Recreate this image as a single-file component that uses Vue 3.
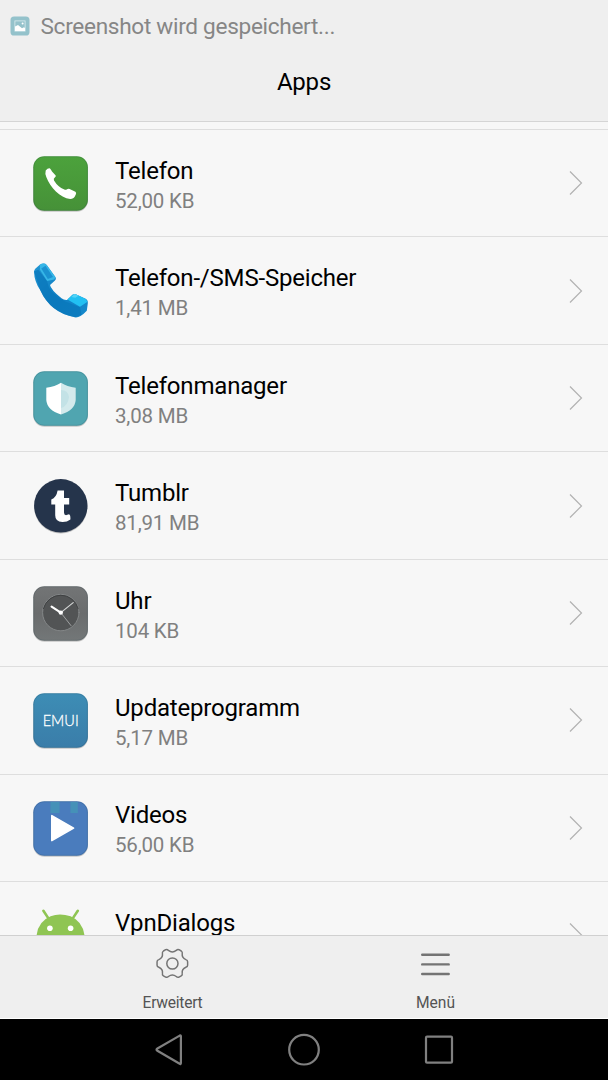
<script setup>
const apps = [
  { icon: 'phone', name: 'Telefon', size: '52,00 KB' },
  { icon: 'handset', name: 'Telefon-/SMS-Speicher', size: '1,41 MB' },
  { icon: 'shield', name: 'Telefonmanager', size: '3,08 MB' },
  { icon: 'tumblr', name: 'Tumblr', size: '81,91 MB' },
  { icon: 'clock', name: 'Uhr', size: '104 KB' },
  { icon: 'emui', name: 'Updateprogramm', size: '5,17 MB' },
  { icon: 'video', name: 'Videos', size: '56,00 KB' },
  { icon: 'android', name: 'VpnDialogs', size: '' },
]
const tiles = {
  phone: 'url(#green)',
  shield: '#50a5b0',
  clock: 'url(#grey)',
  emui: 'url(#blue)',
  video: '#4a7cbd',
}
</script>

<template>
  <div class="screen">
    <svg class="defs" aria-hidden="true">
      <defs>
        <linearGradient id="green" x1="0" y1="0" x2="0" y2="1">
          <stop offset="0" stop-color="#4ca23c" /><stop offset="1" stop-color="#469138" />
        </linearGradient>
        <linearGradient id="grey" x1="0" y1="0" x2="0" y2="1">
          <stop offset="0" stop-color="#737576" /><stop offset=".5" stop-color="#6a6c6d" /><stop offset="1" stop-color="#737778" />
        </linearGradient>
        <linearGradient id="blue" x1="0" y1="0" x2="0" y2="1">
          <stop offset="0" stop-color="#3d8db5" /><stop offset="1" stop-color="#3a7da9" />
        </linearGradient>
        <linearGradient id="tube" x1="0" y1="0" x2="1" y2="1">
          <stop offset="0" stop-color="#2296d3" /><stop offset=".5" stop-color="#0f80c4" /><stop offset="1" stop-color="#1589cc" />
        </linearGradient>
      </defs>
    </svg>

    <header class="header">
      <div class="status">
        <svg class="status-icon" viewBox="0 0 20 20">
          <rect x=".5" y=".5" width="19" height="19" rx="3.6" fill="#94c2cb" />
          <rect x="4.9" y="4.9" width="10.2" height="10.2" fill="none" stroke="#d9ecef" stroke-width=".8" />
          <path d="M5 10.5 8 9l4 3.3 2-1 1 .7v3H5z" fill="#fff" />
          <circle cx="12.6" cy="7.4" r="1" fill="#fff" />
        </svg>
        <span class="status-text">Screenshot wird gespeichert...</span>
      </div>
      <h1 class="title">Apps</h1>
    </header>

    <main class="list">
      <div v-for="app in apps" :key="app.name" class="row">
        <svg class="icon" viewBox="0 0 60 60">
          <template v-if="tiles[app.icon]">
            <rect x="3.3" y="4.4" width="54.6" height="54.4" rx="11" fill="#000" opacity=".2" />
            <rect x="3.3" y="3.2" width="54.6" height="54.6" rx="11" :fill="tiles[app.icon]" />
            <rect x="3.8" y="3.7" width="53.6" height="53.6" rx="10.5" fill="none" stroke="#20404a" stroke-opacity=".16" />
          </template>

          <path v-if="app.icon === 'phone'" fill="#fff" d="M15.7 17.4Q17.8 15 20 15.4Q21.3 16.7 22 18.4L25.7 22.4Q26.2 23.4 24.8 24.6Q23.2 25.9 24 27.4Q28 34 34.4 36.6Q35.7 37.2 37 36.3Q38.3 35.3 39.6 36L45.4 38.8Q46.7 39.8 45.8 41.4Q44 46 40.2 46.1C30 44.4 20.2 34.4 16.4 24.2Q14.8 20 15.7 17.4Z" />

          <g v-else-if="app.icon === 'handset'" transform="translate(0 .3) scale(1 .98)">
            <path fill="url(#tube)" d="M4 10.5Q4.2 8.8 5.5 7.4L9.8 3.6Q14 1 16.7 3.8L25.5 16.2Q26.6 18 25 19.6L20 24.1Q20.6 28.5 31.5 37.8Q34 39.8 37 39.5L42.5 34.2Q44.3 33 46.2 34L55.5 38.3Q58.2 39.7 57.8 43.1L56.8 50.5Q50 57.9 45 57.2Q20.4 52.5 10.3 29.6Q4.3 21 4 10.5Z" />
            <path fill="#36b6e7" d="M9.8 3.6Q14 1 16.7 3.8L25.5 16.2 24.3 18.5 17 20 10 8.7Z" />
            <path fill="#1b92d1" d="M11.3 7.4 15.5 4.5 23 16 17.8 18Z" />
            <path fill="#22c0f2" d="M37.4 39 42.5 34.2Q44.3 33 46.2 34L55.5 38.3 57.5 41.3 50 46.5Z" />
            <path fill="#54d4f7" d="M41.4 36.4 45.3 37.3 48.6 35.2 44.5 33.4Z" />
            <path fill="#0875b9" opacity=".65" d="M4 10.5 8.3 8.5 17 20 19 27Q25 36 35.5 41L50 47 51.5 54.5 45 57.2Q20.4 52.5 10.3 29.6Z" />
          </g>

          <g v-else-if="app.icon === 'shield'">
            <path fill="#fff" d="M31 14.7Q25 18.6 16.3 19.7V32Q17 42.2 31 46.4Z" />
            <path fill="#d3eaec" d="M31 14.7Q37 18.6 45.7 19.7V32Q45 42.2 31 46.4Z" />
            <path fill="#c3e2e6" d="M31 22Q38 22 39 29Q38 38 31 40Z" />
          </g>

          <g v-else-if="app.icon === 'tumblr'">
            <circle cx="30.8" cy="31" r="26.6" fill="#000" opacity=".22" />
            <circle cx="30.8" cy="29.8" r="26.7" fill="#25344b" />
            <path fill="#fff" d="M27.6 14.5H34V22H39.2V28.5H34V36.6Q34 39.4 36.5 39.1L39 38.3Q40.6 38.8 40.4 43.6Q37 46.2 32.4 46.1Q25.2 45.8 25.2 39.3V28.5H21.3V23.5Q26.4 21.6 27.6 14.5Z" />
          </g>

          <g v-else-if="app.icon === 'clock'" stroke-linecap="round" transform="translate(0 -.4)">
            <circle cx="30.8" cy="30" r="18.2" fill="#525455" stroke="#888b8c" stroke-width=".9" />
            <path d="M13.4 26A18 18 0 0 1 48.2 26" fill="none" stroke="#3c3e3f" stroke-width=".9" />
            <path d="M30.8 30 41 43" stroke="#a7a9aa" stroke-width=".9" />
            <path d="M30.8 30 43.2 20" stroke="#d5d7d7" stroke-width="1.2" />
            <path d="M30.8 30 21.6 24" stroke="#fff" stroke-width="2.2" />
            <circle cx="30.8" cy="30" r="2.2" fill="#fff" />
          </g>

          <text v-else-if="app.icon === 'emui'" x="12.7" y="35.8" class="emui" textLength="36" lengthAdjust="spacingAndGlyphs">EMUI</text>

          <g v-else-if="app.icon === 'video'">
            <path fill="#4591b8" d="M20.5 4H29.5V15H20.5ZM40.5 4H47.8V15H40.5Z" />
            <path fill="#fff" stroke="#fff" stroke-width="1.6" stroke-linejoin="round" d="M21.8 17.6V42.6L43.6 30.1Z" />
          </g>

          <g v-else-if="app.icon === 'android'" transform="translate(-.4 1)">
            <path d="M13.8 4.8 19 12.6M48.2 4.8 43 12.6" stroke="#8fc553" stroke-width="2.6" stroke-linecap="round" />
            <path fill="#8fc553" d="M6.8 33Q7 16 21 10.3Q30 6.8 41 10.3Q54.5 16 55.2 33Z" />
            <circle cx="20.3" cy="22.3" r="2.8" fill="#fff" /><circle cx="41" cy="22.3" r="2.8" fill="#fff" />
          </g>
        </svg>
        <div class="text">
          <div class="name">{{ app.name }}</div>
          <div class="size">{{ app.size }}</div>
        </div>
        <svg class="chevron" viewBox="0 0 14 26"><path d="M1 1.5 12.5 13 1 24.5" /></svg>
      </div>
    </main>

    <footer class="toolbar">
      <div class="action">
        <svg viewBox="0 0 36 36" fill="none" stroke="#747474" stroke-width="1.5" stroke-linejoin="round">
          <path transform="translate(-.3 0) scale(.98)" d="M11.2 3.8Q12.8 3.2 14 4.5Q18 7.5 22 4.5Q23.2 3.2 24.8 3.8L27.1 5.1Q28.5 6 28.1 7.6Q27.5 12.2 31.8 13.9Q33.6 14.4 33.6 16V19.6Q33.6 21.2 31.8 21.7Q27.5 23.4 28.1 28Q28.5 29.7 27.1 30.5L24.8 31.8Q23.2 32.4 22 31.1Q18 28.1 14 31.1Q12.8 32.4 11.2 31.8L8.9 30.5Q7.5 29.7 7.9 28Q8.5 23.4 4.2 21.7Q2.4 21.2 2.4 19.6V16Q2.4 14.4 4.2 13.9Q8.5 12.2 7.9 7.6Q7.5 6 8.9 5.1Z" />
          <circle cx="17.4" cy="17.5" r="5.6" />
        </svg>
        <span class="tight">Erweitert</span>
      </div>
      <div class="action">
        <svg viewBox="0 0 36 36" stroke="#747474" stroke-width="2.4" stroke-linecap="round"><path d="M4.2 8.8H30.7M4.2 18.4H30.7M4.2 28H30.7" /></svg>
        <span>Menü</span>
      </div>
    </footer>

    <nav class="nav">
      <svg viewBox="0 0 36 36"><path d="M6.4 16.5 28.7 3.6Q29.9 3 29.9 4.3V31.1Q29.9 32.5 28.7 31.8L6.4 18.8Q4.6 17.6 6.4 16.5Z" /></svg>
      <svg viewBox="0 0 36 36"><circle cx="18" cy="17.7" r="14.8" /></svg>
      <svg viewBox="0 0 36 36"><rect x="5" y="4.7" width="26" height="26" rx="1" /></svg>
    </nav>
  </div>
</template>

<style>
body { margin: 0; background: #f7f7f7; }
</style>

<style scoped>
.screen {
  width: 608px; height: 1080px; display: flex; flex-direction: column; overflow: hidden;
  background: #f7f7f7; font-family: Roboto, "Noto Sans", sans-serif; color: #000;
}
.defs { position: absolute; width: 0; height: 0; }
.header { flex: none; box-sizing: border-box; height: 122px; background: #efefef; border-bottom: 1px solid #d5d5d5; }
.status { display: flex; align-items: center; height: 52px; padding-left: 10px; gap: 10.5px; }
.status-icon { width: 20px; height: 20px; }
.status-text { font-size: 22.6px; line-height: 28px; letter-spacing: -.3px; padding-top: 1.5px; color: #868686; }
.title { margin: 14px 0 0; font-size: 24px; line-height: 32px; font-weight: 400; letter-spacing: -.2px; text-align: center; }
.list { flex: 1; min-height: 0; overflow: hidden; padding-top: 7px; }
.row {
  box-sizing: border-box; height: 107.44px; display: flex; align-items: center;
  border-top: 1px solid #dedede; padding: 0 25px 0 30px;
}
.icon { width: 60px; height: 60px; flex: none; }
.text { flex: 1; margin-left: 25px; padding-top: 4.3px; }
.name { font-size: 24px; line-height: 31px; letter-spacing: -.19px; white-space: nowrap; }
.size { font-size: 20.5px; line-height: 28px; height: 28px; letter-spacing: -.2px; color: #808080; }
.chevron { width: 14px; height: 26px; fill: none; stroke: #b2b2b2; stroke-width: 1.2; }
.emui { font-family: Lato, sans-serif; font-weight: 300; font-size: 16px; fill: #fff; stroke: #fff; stroke-width: .3px; }
.toolbar {
  flex: none; box-sizing: border-box; height: 84px; display: flex; padding: 0 41px;
  background: #efefef; border-top: 1px solid #d0d0d0; border-bottom: 1px solid #fff;
}
.action { flex: 1; display: flex; flex-direction: column; align-items: center; padding-top: 10px; color: #545454; }
.action svg { width: 36px; height: 36px; }
.action span { font-size: 15.6px; line-height: 20px; margin-top: 11px; }
.action .tight { letter-spacing: -.25px; }
.nav { flex: none; height: 61px; background: #000; display: flex; justify-content: center; align-items: center; gap: 99px; }
.nav svg { width: 36px; height: 36px; fill: none; stroke: #808080; stroke-width: 2.2; }
</style>
